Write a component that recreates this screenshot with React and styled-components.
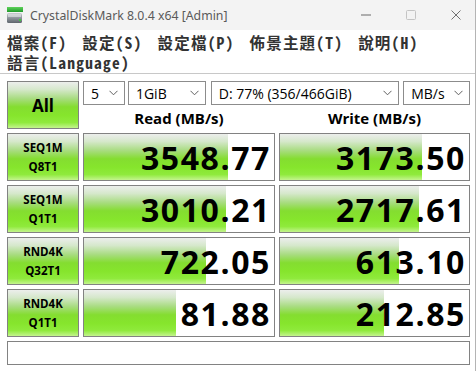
import React from "react";
import styled, { createGlobalStyle } from "styled-components";

const GlobalStyle = createGlobalStyle`
  html, body { margin: 0; padding: 0; background: #ffffff; }
  * { box-sizing: border-box; }
`;

const Window = styled.div`
  width: 476px;
  height: 371px;
  background: #ffffff;
  border-right: 1px solid #b4b4b4;
  overflow: hidden;
  font-family: "Segoe UI", "Open Sans", "Noto Sans", sans-serif;
`;

const TitleBar = styled.div`
  height: 30px;
  background: #f3f3f3;
  display: flex;
  align-items: center;
  padding-left: 7px;
`;

const TitleText = styled.span`
  margin-left: 7px;
  font-family: "Noto Sans", "Open Sans", sans-serif;
  font-size: 12.3px;
  color: #5a5a5a;
`;

const WinControls = styled.div`
  margin-left: auto;
  margin-right: -3px;
  display: flex;
  height: 100%;
`;

const WinButton = styled.div`
  width: 45px;
  height: 100%;
  display: flex;
  align-items: center;
  justify-content: center;
`;

const MenuBar = styled.div`
  height: 44px;
  border-bottom: 1px solid #c8c8c8;
  padding: 2px 7px 0 7px;
  display: flex;
  flex-wrap: wrap;
  column-gap: 15px;
  align-content: flex-start;
`;

const MenuItem = styled.span`
  height: 20px;
  line-height: 20px;
  font-family: "Noto Sans Mono CJK TC", "Noto Sans CJK TC", sans-serif;
  font-weight: 700;
  font-size: 15.5px;
  letter-spacing: 1.2px;
  color: #333333;
  white-space: nowrap;
`;

const Main = styled.div`
  padding: 7px 0 0 7px;
  display: grid;
  grid-template-columns: 72px 192px 191px;
  grid-auto-rows: 48px;
  gap: 4px;
`;

const GreenFace = `
  background: linear-gradient(
    to bottom,
    #eceeec 0%,
    #d6e8cc 16%,
    #a8dc80 36%,
    #84dd30 54%,
    #86e52c 72%,
    #8fea3c 88%,
    #c4f48e 100%
  );
`;

const AllButton = styled.div`
  ${GreenFace}
  border: 1px solid #828282;
  display: flex;
  align-items: center;
  justify-content: center;
  font-family: "Open Sans", "Noto Sans", sans-serif;
  font-weight: 700;
  font-size: 17px;
  color: #000;
`;

const TopArea = styled.div`
  grid-column: 2 / span 2;
  display: flex;
  flex-direction: column;
`;

const SelectRow = styled.div`
  display: flex;
  height: 24px;
`;

const Select = styled.div`
  width: ${(p) => p.$w}px;
  margin-left: ${(p) => p.$ml || 0}px;
  height: 24px;
  border: 1px solid #8c8c8c;
  background: #fff;
  display: flex;
  align-items: center;
  padding: 0 6px 0 7px;
  font-family: "Open Sans", "Noto Sans", sans-serif;
  font-size: 14px;
  color: #000;
  white-space: nowrap;
`;

const SelectText = styled.span`
  flex: 1;
  overflow: hidden;
`;

const HeaderRow = styled.div`
  display: grid;
  grid-template-columns: 192px 191px;
  column-gap: 4px;
  flex: 1;
`;

const Header = styled.div`
  display: flex;
  align-items: center;
  justify-content: center;
  padding-top: 1px;
  font-family: "Open Sans", "Noto Sans", sans-serif;
  font-weight: 700;
  font-size: 15px;
  color: #000;
`;

const TestLabel = styled.div`
  ${GreenFace}
  border: 1px solid #828282;
  display: flex;
  flex-direction: column;
  align-items: center;
  justify-content: center;
  font-family: "Open Sans", "Noto Sans", sans-serif;
  font-weight: 700;
  font-size: 11.5px;
  line-height: 19px;
  color: #000;
`;

const ValueCell = styled.div`
  position: relative;
  border: 1px solid #828282;
  background: #fff;
  display: flex;
  align-items: center;
  justify-content: flex-end;
  padding-right: 3px;
  overflow: hidden;
`;

const Bar = styled.div`
  position: absolute;
  left: 0;
  top: 0;
  bottom: 0;
  ${GreenFace}
`;

const Value = styled.span`
  position: relative;
  font-family: "Open Sans", "Noto Sans", sans-serif;
  font-weight: 700;
  font-size: 32px;
  letter-spacing: 1.6px;
  line-height: 1;
  color: #000;
  margin-top: 1px;
`;

const Comment = styled.div`
  grid-column: 1 / span 3;
  height: 24px;
  border: 1px solid #828282;
  background: #fff;
`;

const Chevron = () => (
  <svg width="9" height="6" viewBox="0 0 9 6">
    <polyline points="0.5,0.8 4.5,4.8 8.5,0.8" fill="none" stroke="#606060" strokeWidth="1" />
  </svg>
);

const AppIcon = () => (
  <svg width="16" height="17" viewBox="0 0 16 17">
    <defs>
      <linearGradient id="gbar" x1="0" y1="0" x2="0" y2="1">
        <stop offset="0" stopColor="#5fd35a" />
        <stop offset="1" stopColor="#1f9a2b" />
      </linearGradient>
      <linearGradient id="gbody" x1="0" y1="0" x2="0" y2="1">
        <stop offset="0" stopColor="#c9cdd1" />
        <stop offset="0.5" stopColor="#8d949b" />
        <stop offset="1" stopColor="#5f666d" />
      </linearGradient>
    </defs>
    <rect x="0" y="0" width="16" height="5" fill="url(#gbar)" />
    <rect x="0" y="6" width="15" height="10" rx="1.5" fill="url(#gbody)" />
    <rect x="1" y="7" width="13" height="3" fill="#e4e7ea" opacity="0.6" />
    <rect x="12" y="12" width="2" height="2" fill="#3ccf3c" />
  </svg>
);

const rows = [
  { l1: "SEQ1M", l2: "Q8T1", r: "3548.77", rw: 0.76, w: "3173.50", ww: 0.75 },
  { l1: "SEQ1M", l2: "Q1T1", r: "3010.21", rw: 0.748, w: "2717.61", ww: 0.735 },
  { l1: "RND4K", l2: "Q32T1", r: "722.05", rw: 0.643, w: "613.10", ww: 0.63 },
  { l1: "RND4K", l2: "Q1T1", r: "81.88", rw: 0.485, w: "212.85", ww: 0.552 },
];

export default function App() {
  return (
    <>
      <GlobalStyle />
      <Window>
        <TitleBar>
          <AppIcon />
          <TitleText>CrystalDiskMark 8.0.4 x64 [Admin]</TitleText>
          <WinControls>
            <WinButton>
              <svg width="10" height="2" viewBox="0 0 10 2">
                <rect x="0" y="0.5" width="10" height="1" fill="#6a6a6a" />
              </svg>
            </WinButton>
            <WinButton>
              <svg width="10" height="10" viewBox="0 0 10 10">
                <rect x="0.5" y="0.5" width="9" height="9" rx="1" fill="none" stroke="#c4c4c4" />
              </svg>
            </WinButton>
            <WinButton>
              <svg width="10" height="10" viewBox="0 0 10 10">
                <path d="M0.5 0.5 L9.5 9.5 M9.5 0.5 L0.5 9.5" stroke="#707070" strokeWidth="1" />
              </svg>
            </WinButton>
          </WinControls>
        </TitleBar>
        <MenuBar>
          <MenuItem>檔案(F)</MenuItem>
          <MenuItem>設定(S)</MenuItem>
          <MenuItem>設定檔(P)</MenuItem>
          <MenuItem>佈景主題(T)</MenuItem>
          <MenuItem>說明(H)</MenuItem>
          <MenuItem>語言(Language)</MenuItem>
        </MenuBar>
        <Main>
          <AllButton>All</AllButton>
          <TopArea>
            <SelectRow>
              <Select $w={42}>
                <SelectText>5</SelectText>
                <Chevron />
              </Select>
              <Select $w={78} $ml={3}>
                <SelectText>1GiB</SelectText>
                <Chevron />
              </Select>
              <Select $w={189} $ml={5}>
                <SelectText>D: 77% (356/466GiB)</SelectText>
                <Chevron />
              </Select>
              <Select $w={67} $ml={4}>
                <SelectText>MB/s</SelectText>
                <Chevron />
              </Select>
            </SelectRow>
            <HeaderRow>
              <Header>Read (MB/s)</Header>
              <Header>Write (MB/s)</Header>
            </HeaderRow>
          </TopArea>
          {rows.map((r, i) => (
            <React.Fragment key={i}>
              <TestLabel>
                <span>{r.l1}</span>
                <span>{r.l2}</span>
              </TestLabel>
              <ValueCell>
                <Bar style={{ width: `${r.rw * 100}%` }} />
                <Value>{r.r}</Value>
              </ValueCell>
              <ValueCell>
                <Bar style={{ width: `${r.ww * 100}%` }} />
                <Value>{r.w}</Value>
              </ValueCell>
            </React.Fragment>
          ))}
          <Comment />
        </Main>
      </Window>
    </>
  );
}
